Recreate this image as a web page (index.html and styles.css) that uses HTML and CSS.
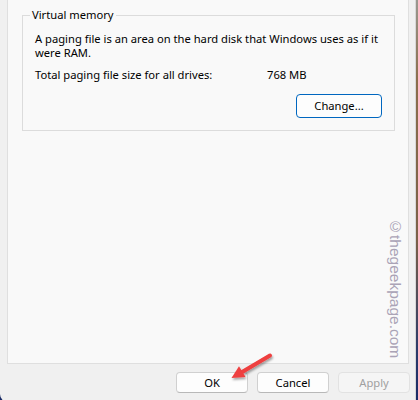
FILE: index.html
```html
<!DOCTYPE html>
<html>
<head>
<meta charset="utf-8">
<link rel="stylesheet" href="styles.css">
</head>
<body>
<div class="desktop">
  <div class="window">
    <div class="panel">
      <fieldset class="group">
        <legend class="group-title">Virtual memory</legend>
        <p class="desc">A paging file is an area on the hard disk that Windows uses as if it were RAM.</p>
        <div class="total">
          <span class="total-label">Total paging file size for all drives:</span>
          <span class="total-value">768 MB</span>
        </div>
        <div class="change-row">
          <button class="btn btn-primary-outline">Change...</button>
        </div>
      </fieldset>
      <div class="watermark">©thegeekpage.com</div>
    </div>
    <div class="actions">
      <button class="btn">OK</button>
      <button class="btn">Cancel</button>
      <button class="btn btn-disabled">Apply</button>
    </div>
    <svg class="arrow" width="60" height="40" viewBox="225 350 60 40">
      <defs>
        <filter id="sh" x="-30%" y="-30%" width="160%" height="160%">
          <feDropShadow dx="1" dy="2" stdDeviation="1.2" flood-color="#000" flood-opacity="0.35"/>
        </filter>
      </defs>
      <g filter="url(#sh)">
        <line x1="270" y1="355.5" x2="240" y2="373.3" stroke="#ee3f3f" stroke-width="4" stroke-linecap="round"/>
        <polygon points="231.5,378 239,366.2 245.5,377" fill="#ee3f3f"/>
      </g>
    </svg>
  </div>
</div>
</body>
</html>
```

FILE: styles.css
```css
html, body {
  margin: 0;
  padding: 0;
}
body {
  width: 418px;
  height: 400px;
  overflow: hidden;
  font-family: "Noto Sans", "Open Sans", sans-serif;
  font-size: 11.2px;
  color: #000;
}
.desktop {
  width: 418px;
  height: 400px;
  background: linear-gradient(to bottom, #9a9890 0%, #8a6e4c 20%, #7a6048 60%, #2a3a6a 88%, #1a2b66 100%);
  overflow: hidden;
}
.window {
  position: relative;
  width: 416px;
  height: 402px;
  box-sizing: border-box;
  background: #f0f0f0;
  border-right: 1px solid #d8d8d8;
  border-bottom-left-radius: 8px;
  padding-left: 7px;
}
.panel {
  position: relative;
  width: 402px;
  height: 364px;
  box-sizing: border-box;
  background: #f9f9f9;
  border: 1px solid #dfdfdf;
  border-top: none;
  padding-top: 0;
  overflow: hidden;
}
.group {
  margin: 7px 13px 0 14px;
  padding: 9px 12px 12px 12px;
  border: 1px solid #dcdcdc;
  min-width: 0;
}
.group-title {
  margin-left: -5px;
  padding: 0 2px;
  line-height: 16px;
  font-size: 11.2px;
}
.desc {
  margin: 0;
  line-height: 14px;
  margin-right: -4px;
}
.total {
  display: grid;
  grid-template-columns: 232px auto;
  margin-top: 8px;
  line-height: 14px;
}
.change-row {
  display: flex;
  justify-content: flex-end;
  margin-top: 12px;
}
.btn {
  font-family: "Noto Sans", "Open Sans", sans-serif;
  font-size: 11.2px;
  color: #000;
  width: 72px;
  height: 21px;
  padding: 0;
  box-sizing: border-box;
  background: #fdfdfd;
  border: 1px solid #d0d0d0;
  border-bottom-color: #b8b8b8;
  border-radius: 4px;
  line-height: 17px;
}
.btn-primary-outline {
  width: 86px;
  height: 24px;
  border: 1px solid #0067c0;
  background: #fdfdfd;
  line-height: 20px;
}
.btn-disabled {
  background: #f5f5f5;
  border-color: #e2e2e2;
  color: #a0a0a0;
}
.actions {
  display: flex;
  justify-content: flex-end;
  gap: 9px;
  margin-top: 8px;
  padding-right: 5px;
}
.watermark {
  position: absolute;
  left: 380px;
  top: 218px;
  writing-mode: vertical-rl;
  font-family: "Liberation Sans", Arial, sans-serif;
  font-size: 15.5px;
  line-height: 15px;
  color: #aaa3b6;
}
.arrow {
  position: absolute;
  left: 225px;
  top: 350px;
  overflow: visible;
}
```
